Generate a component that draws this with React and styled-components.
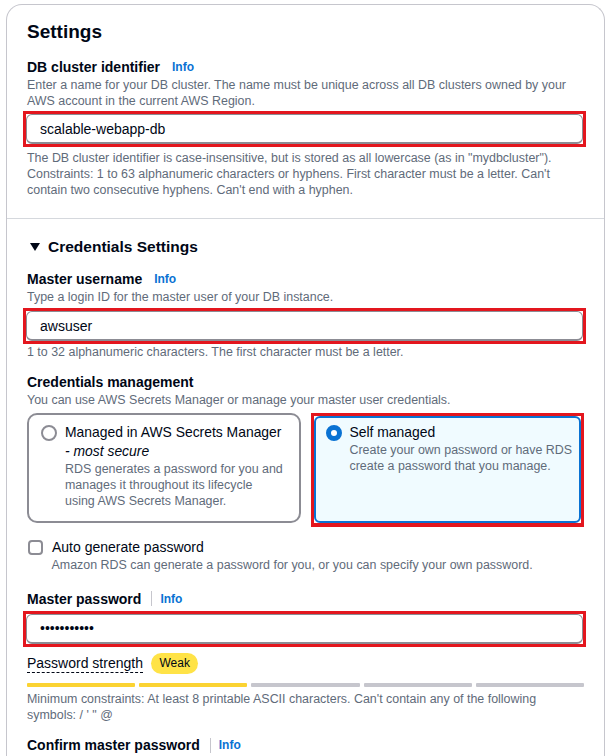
import React from 'react';
import styled, { createGlobalStyle } from 'styled-components';

const GlobalStyle = createGlobalStyle`
  html, body { margin: 0; padding: 0; background: #ffffff; }
  body {
    font-family: "Liberation Sans", Arial, sans-serif;
    color: #000716;
  }
  * { box-sizing: border-box; }
`;

const Page = styled.div`
  padding: 4px 3px 0 6px;
  height: 756px;
  overflow: hidden;
`;

const Card = styled.div`
  border: 1px solid #c6c6cd;
  border-bottom: none;
  border-radius: 16px 16px 0 0;
  min-height: 800px;
`;

const Section = styled.section`
  padding: ${(p) => p.$top}px 20px 20px 20px;
  & + & {
    border-top: 1px solid #d5d8dd;
  }
`;

const Heading = styled.h2`
  margin: 0;
  font-size: 19px;
  line-height: 24px;
  font-weight: 700;
`;

const ExpandHeader = styled.div`
  display: flex;
  align-items: center;
  gap: 8px;
  font-size: 15.5px;
  line-height: 20px;
  font-weight: 700;
  svg {
    margin-left: 3px;
    flex: none;
  }
`;

const LabelRow = styled.div`
  display: flex;
  align-items: center;
  margin-top: ${(p) => p.$mt || 0}px;
`;

const Label = styled.span`
  font-size: 14px;
  line-height: 20px;
  font-weight: 700;
  color: #000716;
`;

const Separator = styled.span`
  width: 1px;
  height: 15px;
  background: #c6c6cd;
  margin-left: 10px;
`;

const InfoLink = styled.a`
  font-size: 12px;
  line-height: 20px;
  font-weight: 700;
  color: #0972d3;
  text-decoration: none;
  margin-left: ${(p) => (p.$sep ? 8 : 12)}px;
`;

const Desc = styled.div`
  font-size: 12.45px;
  line-height: 16px;
  color: #5f6b7a;
  margin-top: ${(p) => p.$mt || 0}px;
  padding-left: ${(p) => p.$indent || 0}px;
`;

const Highlight = styled.div`
  border: 3px solid #e3161e;
  margin: ${(p) => p.$mt || 0}px -2px 0 -4px;
`;

const TextInput = styled.input`
  display: block;
  width: 100%;
  height: 30px;
  margin: 0;
  border: 1px solid #8c8c94;
  border-bottom-width: 2px;
  border-radius: 6px;
  padding: 0 13px;
  font-family: "Liberation Sans", Arial, sans-serif;
  font-size: 14px;
  color: #000716;
  background: #ffffff;
  outline: none;
`;

const TileGrid = styled.div`
  display: grid;
  grid-template-columns: 1fr 1fr;
  gap: 10px;
  margin-top: 5px;
`;

const TileHighlight = styled.div`
  border: 3px solid #e3161e;
  border-bottom-width: 4px;
  margin-bottom: -4px;
`;

const Tile = styled.div`
  display: flex;
  gap: 8px;
  height: 100%;
  border: 2px solid ${(p) => (p.$selected ? '#0972d3' : '#8c8c94')};
  background: ${(p) => (p.$selected ? '#f0fbff' : '#ffffff')};
  border-radius: ${(p) => (p.$selected ? '6px' : '10px')};
  padding: ${(p) => (p.$selected ? '5px 5px 10px 10px' : '8px 14.5px 12px 12px')};
`;

const Radio = styled.span`
  flex: none;
  width: 16px;
  height: 16px;
  margin-top: 1.5px;
  border-radius: 50%;
  background: #ffffff;
  border: ${(p) => (p.$checked ? '5px solid #0972d3' : '2px solid #8c8c94')};
`;

const TileBody = styled.div`
  flex: 1;
  min-width: 0;
`;

const TileTitle = styled.div`
  font-size: 13.9px;
  line-height: 19px;
  color: #000716;
  em {
    font-style: italic;
  }
`;

const CheckRow = styled.div`
  display: flex;
  align-items: center;
  gap: 9px;
  margin-top: 14px;
`;

const Checkbox = styled.span`
  flex: none;
  width: 15px;
  height: 15px;
  margin-left: 1px;
  border: 2px solid #8c8c94;
  border-radius: 4px;
  background: #ffffff;
`;

const CheckLabel = styled.span`
  font-size: 14px;
  line-height: 20px;
`;

const StrengthRow = styled.div`
  display: flex;
  align-items: center;
  gap: 8.5px;
  margin-top: 6.5px;
`;

const StrengthLabel = styled.span`
  font-size: 14px;
  line-height: 17px;
  border-bottom: 1px dashed #000716;
`;

const Badge = styled.span`
  height: 21px;
  line-height: 21px;
  padding: 0 8px;
  border-radius: 11px;
  background: #ffe347;
  font-size: 12px;
  color: #000716;
`;

const Bars = styled.div`
  display: flex;
  gap: 4px;
  margin-top: 9px;
`;

const Bar = styled.span`
  flex: 1;
  height: 4px;
  border-radius: 1px;
  background: ${(p) => (p.$on ? '#fbd332' : '#c6c6cd')};
`;

const Caret = () => (
  <svg width="10" height="8" viewBox="0 0 10 8">
    <polygon points="0,0 10,0 5,8" fill="#000716" />
  </svg>
);

export default function App() {
  return (
    <>
      <GlobalStyle />
      <Page>
        <Card>
          <Section $top={15}>
            <Heading>Settings</Heading>
            <LabelRow $mt={12.5}>
              <Label>DB cluster identifier</Label>
              <InfoLink href="#">Info</InfoLink>
            </LabelRow>
            <Desc>
              Enter a name for your DB cluster. The name must be unique across all DB clusters owned by your
              AWS account in the current AWS Region.
            </Desc>
            <Highlight $mt={2.5}>
              <TextInput type="text" value="scalable-webapp-db" readOnly />
            </Highlight>
            <Desc $mt={2.5}>
              The DB cluster identifier is case-insensitive, but is stored as all lowercase (as in "mydbcluster").
              <br />
              Constraints: 1 to 63 alphanumeric characters or hyphens. First character must be a letter. Can't
              contain two consecutive hyphens. Can't end with a hyphen.
            </Desc>
          </Section>

          <Section $top={18}>
            <ExpandHeader>
              <Caret />
              <span>Credentials Settings</span>
            </ExpandHeader>

            <LabelRow $mt={12}>
              <Label>Master username</Label>
              <InfoLink href="#">Info</InfoLink>
            </LabelRow>
            <Desc>Type a login ID for the master user of your DB instance.</Desc>
            <Highlight $mt={3.5}>
              <TextInput type="text" value="awsuser" readOnly />
            </Highlight>
            <Desc>1 to 32 alphanumeric characters. The first character must be a letter.</Desc>

            <LabelRow $mt={12}>
              <Label>Credentials management</Label>
            </LabelRow>
            <Desc>You can use AWS Secrets Manager or manage your master user credentials.</Desc>

            <TileGrid>
              <Tile>
                <Radio />
                <TileBody>
                  <TileTitle>
                    Managed in AWS Secrets Manager <em>- most secure</em>
                  </TileTitle>
                  <Desc>
                    RDS generates a password for you and manages it throughout its lifecycle using AWS Secrets
                    Manager.
                  </Desc>
                </TileBody>
              </Tile>
              <TileHighlight>
                <Tile $selected>
                  <Radio $checked />
                  <TileBody>
                    <TileTitle>Self managed</TileTitle>
                    <Desc>Create your own password or have RDS create a password that you manage.</Desc>
                  </TileBody>
                </Tile>
              </TileHighlight>
            </TileGrid>

            <CheckRow>
              <Checkbox />
              <CheckLabel>Auto generate password</CheckLabel>
            </CheckRow>
            <Desc $indent={24.5}>
              Amazon RDS can generate a password for you, or you can specify your own password.
            </Desc>

            <LabelRow $mt={15.5}>
              <Label>Master password</Label>
              <Separator />
              <InfoLink href="#" $sep>
                Info
              </InfoLink>
            </LabelRow>
            <Highlight $mt={2}>
              <TextInput type="password" value="abcdefghijk" readOnly />
            </Highlight>

            <StrengthRow>
              <StrengthLabel>Password strength</StrengthLabel>
              <Badge>Weak</Badge>
            </StrengthRow>
            <Bars>
              <Bar $on />
              <Bar $on />
              <Bar />
              <Bar />
              <Bar />
            </Bars>
            <Desc $mt={3.5}>
              Minimum constraints: At least 8 printable ASCII characters. Can't contain any of the following
              symbols: / ' " @
            </Desc>

            <LabelRow $mt={12.7}>
              <Label>Confirm master password</Label>
              <Separator />
              <InfoLink href="#" $sep>
                Info
              </InfoLink>
            </LabelRow>
          </Section>
        </Card>
      </Page>
    </>
  );
}
